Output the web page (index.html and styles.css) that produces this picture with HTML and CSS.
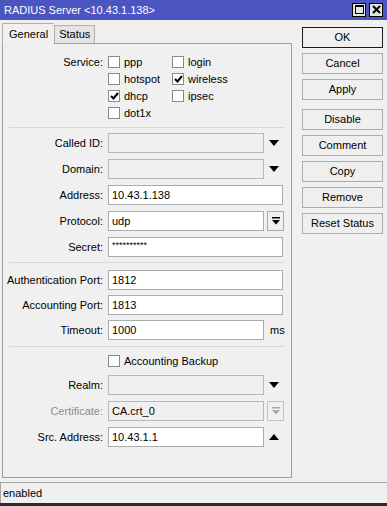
FILE: index.html
```html
<!DOCTYPE html>
<html lang="en">

<head>
    <meta charset="UTF-8">
    <title>RADIUS Server</title>
    <link rel="stylesheet" href="styles.css">
</head>

<body>
    <div class="window">

        <!-- Title bar -->
        <div class="titlebar">
            <span class="title">RADIUS Server &lt;10.43.1.138&gt;</span>
            <div class="wbtns">
                <span class="wbtn"><span class="maxbox"></span></span>
                <span class="wbtn close">
                    <svg width="9" height="9" viewBox="0 0 9 9"><path d="M1 1 L8 8 M8 1 L1 8" stroke="#000" stroke-width="2"/></svg>
                </span>
            </div>
        </div>

        <div class="main">
            <div class="left">
                <div class="tabs">
                    <span class="tab active">General</span>
                    <span class="tab">Status</span>
                </div>

                <div class="panel">
                    <!-- Services -->
                    <div class="services">
                        <div class="label">Service:</div>
                        <div class="checks">
                            <label class="check"><span class="box"></span>ppp</label>
                            <label class="check"><span class="box"></span>login</label>
                            <label class="check"><span class="box"></span>hotspot</label>
                            <label class="check"><span class="box on"><svg width="9" height="8" viewBox="0 0 9 8"><path d="M1 4 L3.5 6.5 L8 1" fill="none" stroke="#000" stroke-width="2"/></svg></span>wireless</label>
                            <label class="check"><span class="box on"><svg width="9" height="8" viewBox="0 0 9 8"><path d="M1 4 L3.5 6.5 L8 1" fill="none" stroke="#000" stroke-width="2"/></svg></span>dhcp</label>
                            <label class="check"><span class="box"></span>ipsec</label>
                            <label class="check"><span class="box"></span>dot1x</label>
                        </div>
                    </div>

                    <hr class="sep">

                    <div class="section s2">
                        <div class="row">
                            <span class="label">Called ID:</span>
                            <span class="field short off"></span>
                            <span class="arrow"><span class="tri down"></span></span>
                        </div>
                        <div class="row">
                            <span class="label">Domain:</span>
                            <span class="field short off"></span>
                            <span class="arrow"><span class="tri down"></span></span>
                        </div>
                        <div class="row">
                            <span class="label">Address:</span>
                            <span class="field">10.43.1.138</span>
                        </div>
                        <div class="row">
                            <span class="label">Protocol:</span>
                            <span class="field short">udp</span>
                            <span class="drop">
                                <svg width="8" height="8" viewBox="0 0 8 8"><rect x="0" y="0" width="8" height="1.5" fill="#000"/><polygon points="0,3 8,3 4,7.5" fill="#000"/></svg>
                            </span>
                        </div>
                        <div class="row">
                            <span class="label">Secret:</span>
                            <span class="field secret">**********</span>
                        </div>
                    </div>

                    <hr class="sep">

                    <div class="section s3">
                        <div class="row">
                            <span class="label">Authentication Port:</span>
                            <span class="field">1812</span>
                        </div>
                        <div class="row">
                            <span class="label">Accounting Port:</span>
                            <span class="field">1813</span>
                        </div>
                        <div class="row">
                            <span class="label">Timeout:</span>
                            <span class="field short">1000</span>
                            <span class="unit">ms</span>
                        </div>
                    </div>

                    <hr class="sep">

                    <div class="section s4">
                        <div class="row checkrow">
                            <span class="label"></span>
                            <label class="check"><span class="box"></span>Accounting Backup</label>
                        </div>
                        <div class="row">
                            <span class="label">Realm:</span>
                            <span class="field short off"></span>
                            <span class="arrow"><span class="tri down"></span></span>
                        </div>
                        <div class="row">
                            <span class="label grey">Certificate:</span>
                            <span class="field short off">CA.crt_0</span>
                            <span class="drop off">
                                <svg width="8" height="8" viewBox="0 0 8 8"><rect x="0" y="0" width="8" height="1.5" fill="#a8a8a8"/><polygon points="0,3 8,3 4,7.5" fill="#a8a8a8"/></svg>
                            </span>
                        </div>
                        <div class="row">
                            <span class="label">Src. Address:</span>
                            <span class="field short">10.43.1.1</span>
                            <span class="arrow"><span class="tri up"></span></span>
                        </div>
                    </div>
                </div>
            </div>

            <!-- Buttons -->
            <div class="buttons">
                <button class="default">OK</button>
                <button>Cancel</button>
                <button class="gap">Apply</button>
                <button>Disable</button>
                <button>Comment</button>
                <button>Copy</button>
                <button>Remove</button>
                <button>Reset Status</button>
            </div>
        </div>

        <div class="statusbar">enabled</div>
    </div>
</body>

</html>
```

FILE: styles.css
```css
* {
    box-sizing: border-box;
}

body {
    margin: 0;
    background: #f0f0f0;
    font-family: "Liberation Sans", Arial, sans-serif;
    font-size: 11px;
    color: #000;
}

.window {
    width: 387px;
    height: 506px;
    display: flex;
    flex-direction: column;
    border-bottom: 3px solid #2a2a2a;
}

/* title bar */
.titlebar {
    height: 20px;
    background: #4a55c2;
    color: #fff;
    display: flex;
    align-items: center;
    justify-content: space-between;
    padding: 0 4px;
    font-size: 11px;
}

.wbtns {
    display: flex;
    gap: 3px;
}

.wbtn {
    width: 14px;
    height: 14px;
    background: #e4e4e4;
    border: 1px solid #000;
    display: flex;
    align-items: center;
    justify-content: center;
}

.maxbox {
    width: 9px;
    height: 9px;
    border: 1px solid #000;
    border-top-width: 2px;
}

/* main */
.main {
    flex: 1;
    display: flex;
}

.left {
    width: 290px;
    margin-left: 2px;
    display: flex;
    flex-direction: column;
}

.tabs {
    display: flex;
    height: 23px;
    padding-top: 2px;
    align-items: flex-end;
}

.tab {
    height: 18px;
    padding: 0 4px;
    border: 1px solid #b0b0b0;
    border-bottom: none;
    background: #e4e4e4;
    display: flex;
    align-items: center;
}

.tab.active {
    height: 21px;
    background: #f0f0f0;
    padding: 0 6px;
    border-right: none;
    position: relative;
    top: 1px;
}

.panel {
    height: 435px;
    border: 1px solid #9e9e9e;
    background: #f0f0f0;
}

.label {
    width: 100px;
    margin-right: 5px;
    text-align: right;
    flex-shrink: 0;
    white-space: nowrap;
}

.grey {
    color: #8d8d8d;
}

/* services */
.services {
    display: flex;
    padding-top: 10px;
    height: 83px;
}

.services .label {
    line-height: 17px;
}

.checks {
    display: grid;
    grid-template-columns: 64px 80px;
    grid-auto-rows: 17px;
}

.check {
    display: flex;
    align-items: center;
    gap: 4px;
}

.box {
    width: 12px;
    height: 12px;
    background: #fff;
    border: 1px solid #8a8a8a;
    display: flex;
    align-items: center;
    justify-content: center;
}

.sep {
    border: none;
    border-top: 1px solid #d9d9d9;
    margin: 0 6px;
    height: 0;
}

/* form rows */
.section {
    display: flex;
    flex-direction: column;
}

.s2 {
    padding: 5px 0 5px;
    gap: 6px;
}

.s3 {
    padding: 7px 0 6px;
    gap: 5px;
}

.s4 {
    padding: 7px 0;
    gap: 6px;
}

.row {
    display: flex;
    align-items: center;
    height: 20px;
}

.checkrow {
    height: 15px;
}

.field {
    width: 175px;
    height: 20px;
    background: #fff;
    border: 1px solid #ababab;
    padding: 0 3px;
    display: flex;
    align-items: center;
}

.field.short {
    width: 156px;
}

.field.off {
    background: #f0f0f0;
    border-color: #b8b8b8;
}

.secret {
    font-size: 9px;
    align-items: flex-start;
    padding-top: 2px;
}

.arrow {
    width: 19px;
    display: flex;
    justify-content: center;
}

.tri {
    width: 0;
    height: 0;
    border-left: 5px solid transparent;
    border-right: 5px solid transparent;
}

.tri.down {
    border-top: 6px solid #000;
}

.tri.up {
    border-bottom: 6px solid #000;
}

.drop {
    width: 17px;
    height: 20px;
    margin-left: 3px;
    border: 1px solid #ababab;
    background: #f0f0f0;
    display: flex;
    align-items: center;
    justify-content: center;
}

.drop.off {
    border-color: #c4c4c4;
}

.unit {
    margin-left: 6px;
}

/* buttons column */
.buttons {
    width: 81px;
    margin-left: 10px;
    padding-top: 7px;
    display: flex;
    flex-direction: column;
    gap: 5px;
}

.buttons button {
    height: 21px;
    width: 81px;
    border: 1px solid #acacac;
    background: #efefef;
    font-family: "Liberation Sans", Arial, sans-serif;
    font-size: 11px;
    padding: 0;
    color: #000;
}

.buttons button.default {
    border-color: #1a1a1a;
}

.buttons button.gap {
    margin-bottom: 4px;
}

/* status bar */
.statusbar {
    height: 22px;
    margin-top: 4px;
    border-top: 1px solid #a8a8a8;
    border-left: 1px solid #a8a8a8;
    padding-left: 2px;
    display: flex;
    align-items: center;
}
```
